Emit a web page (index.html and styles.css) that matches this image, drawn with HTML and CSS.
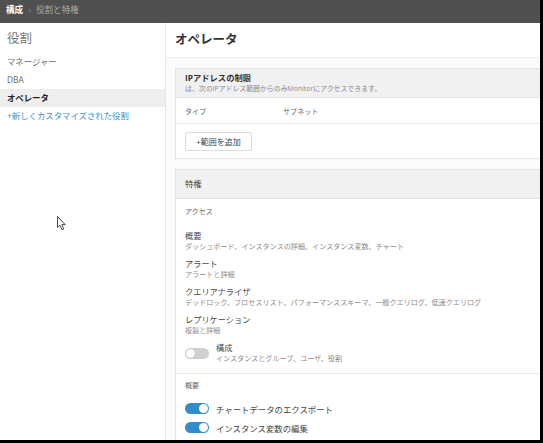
FILE: index.html
```html
<!DOCTYPE html>
<html lang="ja">
<head>
<meta charset="utf-8">
<title>役割と特権</title>
<link rel="stylesheet" href="styles.css">
</head>
<body>
<div class="screen">
  <header class="topbar">
    <span class="crumb-root">構成</span>
    <span class="crumb-sep">›</span>
    <span class="crumb">役割と特権</span>
  </header>
  <div class="layout">
    <aside class="sidebar">
      <h2 class="sidebar-title">役割</h2>
      <ul class="roles">
        <li class="role">マネージャー</li>
        <li class="role">DBA</li>
        <li class="role active">オペレータ</li>
        <li class="role add">+新しくカスタマイズされた役割</li>
      </ul>
    </aside>
    <main class="main">
      <div class="title-bar"><h1 class="page-title">オペレータ</h1></div>
      <div class="content">
        <section class="card">
          <div class="card-head">
            <div class="card-title bold">IPアドレスの制限</div>
            <div class="card-sub">は、次のIPアドレス範囲からのみMonitorにアクセスできます。</div>
          </div>
          <div class="table-head">
            <span class="col-type">タイプ</span>
            <span class="col-subnet">サブネット</span>
          </div>
          <div class="card-actions">
            <button class="btn">+範囲を追加</button>
          </div>
        </section>

        <section class="card">
          <div class="card-head single">
            <div class="card-title">特権</div>
          </div>
          <div class="group">
            <div class="group-label">アクセス</div>
            <div class="perm">
              <div class="perm-title">概要</div>
              <div class="perm-desc">ダッシュボード、インスタンスの詳細、インスタンス変数、チャート</div>
            </div>
            <div class="perm">
              <div class="perm-title">アラート</div>
              <div class="perm-desc">アラートと詳細</div>
            </div>
            <div class="perm">
              <div class="perm-title">クエリアナライザ</div>
              <div class="perm-desc">デッドロック、プロセスリスト、パフォーマンススキーマ、一般クエリログ、低速クエリログ</div>
            </div>
            <div class="perm">
              <div class="perm-title">レプリケーション</div>
              <div class="perm-desc">複製と詳細</div>
            </div>
            <div class="perm toggle-row">
              <span class="toggle off"><span class="knob"></span></span>
              <div>
                <div class="perm-title">構成</div>
                <div class="perm-desc">インスタンスとグループ、ユーザ、役割</div>
              </div>
            </div>
          </div>
          <div class="group second">
            <div class="group-label">概要</div>
            <div class="switch-row">
              <span class="toggle on"><span class="knob"></span></span>
              <span class="switch-label">チャートデータのエクスポート</span>
            </div>
            <div class="switch-row">
              <span class="toggle on"><span class="knob"></span></span>
              <span class="switch-label">インスタンス変数の編集</span>
            </div>
          </div>
        </section>
      </div>
    </main>
  </div>
  <svg class="cursor" width="10" height="15" viewBox="0 0 10 15">
    <path d="M0.5 0.5 L0.5 11.5 L3 9.2 L5 13.8 L6.8 13 L4.9 8.6 L8.2 8.6 Z" fill="#fff" stroke="#333" stroke-width="0.9" stroke-linejoin="round"/>
  </svg>
</div>
</body>
</html>
```

FILE: styles.css
```css
* { box-sizing: border-box; margin: 0; padding: 0; }

html, body {
  width: 543px;
  height: 443px;
  overflow: hidden;
}

body {
  background: #000;
  font-family: "Open Sans", "Noto Sans CJK JP", sans-serif;
  font-size: 8px;
  color: #333;
}

.screen {
  position: relative;
  width: 540px;
  height: 440px;
  overflow: hidden;
  background: #fff;
  display: flex;
  flex-direction: column;
}

.topbar {
  height: 23px;
  flex: none;
  background: #505050;
  display: flex;
  align-items: center;
  gap: 5px;
  padding: 0 0 4px 6px;
  font-size: 8.6px;
  color: #aaa;
}

.crumb-root { color: #fff; font-weight: 700; }
.crumb-sep { color: #888; font-size: 9px; }

.layout {
  flex: 1;
  display: flex;
  min-height: 0;
}

.sidebar {
  width: 166px;
  flex: none;
  border-right: 1px solid #e6e6e6;
  background: #fff;
}

.sidebar-title {
  font-size: 12.5px;
  font-weight: 400;
  color: #777;
  line-height: 20px;
  padding: 6px 0 0 7px;
  margin-bottom: 4px;
}

.roles { list-style: none; }

.role {
  height: 18px;
  line-height: 18px;
  padding-left: 7px;
  font-size: 8.4px;
  color: #6a6a6a;
}

.role.active {
  background: #eeeeee;
  color: #222;
  font-weight: 700;
}

.role.add { color: #3b8fd4; }

.main {
  flex: 1;
  min-width: 0;
  display: flex;
  flex-direction: column;
}

.title-bar {
  height: 35px;
  flex: none;
  background: #fff;
  border-bottom: 1px solid #eeeeee;
  padding-left: 9px;
  display: flex;
  align-items: center;
}

.page-title {
  font-size: 12.5px;
  font-weight: 700;
  color: #333;
  line-height: 16px;
}

.content {
  flex: 1;
  background: #fbfbfb;
  padding: 10px 0 0 9px;
}

.card {
  width: 420px;
  background: #fff;
  border: 1px solid #e4e4e4;
  margin-bottom: 10px;
}

.card-head {
  background: #f1f1f1;
  border-bottom: 1px solid #e3e3e3;
  height: 29px;
  padding: 3px 9px 0;
}

.card-head.single {
  display: flex;
  align-items: center;
  padding-top: 0;
}

.card-title {
  font-size: 8.3px;
  line-height: 12px;
  color: #444;
}

.card-title.bold { font-weight: 700; color: #333; }

.card-sub {
  font-size: 6.9px;
  line-height: 10px;
  color: #8a8a8a;
}

.table-head {
  height: 26px;
  border-bottom: 1px solid #e8e8e8;
  display: flex;
  align-items: center;
  padding-left: 9px;
  font-size: 7.1px;
  color: #666;
}

.col-type { width: 98px; }

.card-actions {
  display: flex;
  padding: 8px 9px 7px;
}

.btn {
  font-family: "Open Sans", "Noto Sans CJK JP", sans-serif;
  font-size: 8px;
  color: #444;
  background: #fff;
  border: 1px solid #dcdcdc;
  border-radius: 2px;
  height: 19px;
  width: 67px;
  line-height: 17px;
}

.group {
  padding: 7px 9px 9px;
}

.group-label {
  font-size: 7px;
  line-height: 12px;
  color: #666;
  margin-bottom: 12px;
}

.perm {
  margin-bottom: 6px;
}

.perm:last-child { margin-bottom: 0; }

.perm-title {
  font-size: 8.2px;
  line-height: 11px;
  color: #4a4a4a;
}

.perm-desc {
  font-size: 7.1px;
  line-height: 11px;
  color: #8c8c8c;
}

.toggle-row {
  display: flex;
  align-items: center;
  gap: 7px;
}

.group.second {
  border-top: 1px solid #ececec;
  padding-top: 6px;
}

.group.second .group-label { margin-bottom: 7px; }

.switch-row {
  height: 19px;
  display: flex;
  align-items: center;
  gap: 7px;
}

.switch-label {
  font-size: 8.4px;
  color: #444;
}

.toggle {
  position: relative;
  width: 24px;
  height: 11px;
  border-radius: 6px;
  flex: none;
}

.toggle.on { background: #2f8dcc; }
.toggle.off { background: #d0d0d0; }

.knob {
  position: absolute;
  top: 1px;
  width: 9px;
  height: 9px;
  border-radius: 50%;
  background: #fff;
}

.toggle.on .knob { right: 1px; }
.toggle.off .knob { left: 1px; box-shadow: 0 0 1px rgba(0,0,0,0.3); }

.cursor {
  position: absolute;
  left: 57px;
  top: 216px;
}
```
